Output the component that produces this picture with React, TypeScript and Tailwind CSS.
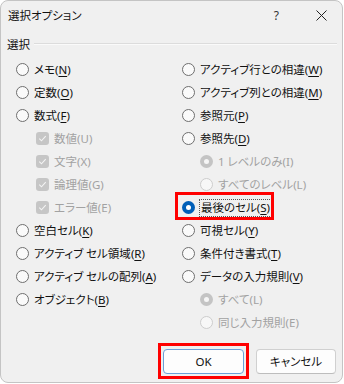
import React from "react";

type Kind = "off" | "on" | "doff" | "don" | "check";
type Item = { t: string; k: string; kind: Kind; indent?: boolean; focus?: boolean };

const left: Item[] = [
  { t: "メモ", k: "N", kind: "off" },
  { t: "定数", k: "O", kind: "off" },
  { t: "数式", k: "F", kind: "off" },
  { t: "数値", k: "U", kind: "check", indent: true },
  { t: "文字", k: "X", kind: "check", indent: true },
  { t: "論理値", k: "G", kind: "check", indent: true },
  { t: "エラー値", k: "E", kind: "check", indent: true },
  { t: "空白セル", k: "K", kind: "off" },
  { t: "アクティブ セル領域", k: "R", kind: "off" },
  { t: "アクティブ セルの配列", k: "A", kind: "off" },
  { t: "オブジェクト", k: "B", kind: "off" },
];

const right: Item[] = [
  { t: "アクティブ行との相違", k: "W", kind: "off" },
  { t: "アクティブ列との相違", k: "M", kind: "off" },
  { t: "参照元", k: "P", kind: "off" },
  { t: "参照先", k: "D", kind: "off" },
  { t: "1 レベルのみ", k: "I", kind: "don", indent: true },
  { t: "すべてのレベル", k: "L", kind: "doff", indent: true },
  { t: "最後のセル", k: "S", kind: "on", focus: true },
  { t: "可視セル", k: "Y", kind: "off" },
  { t: "条件付き書式", k: "T", kind: "off" },
  { t: "データの入力規則", k: "V", kind: "off" },
  { t: "すべて", k: "L", kind: "don", indent: true },
  { t: "同じ入力規則", k: "E", kind: "doff", indent: true },
];

function Mark({ kind }: { kind: Kind }) {
  if (kind === "check")
    return (
      <span className="w-[13px] h-[13px] rounded-[3px] bg-[#c6c6c6] flex items-center justify-center shrink-0">
        <svg width="9" height="9" viewBox="0 0 9 9">
          <path d="M1.3 4.6 L3.5 6.8 L7.7 2.2" fill="none" stroke="#f4f4f4" strokeWidth="1.1" />
        </svg>
      </span>
    );
  if (kind === "on")
    return (
      <span className="w-[13px] h-[13px] rounded-full bg-[#005fb8] flex items-center justify-center shrink-0">
        <span className="w-[5px] h-[5px] rounded-full bg-white" />
      </span>
    );
  if (kind === "don")
    return (
      <span className="w-[13px] h-[13px] rounded-full bg-[#c4c4c4] flex items-center justify-center shrink-0">
        <span className="w-[5px] h-[5px] rounded-full bg-[#f6f6f6]" />
      </span>
    );
  if (kind === "doff")
    return <span className="w-[13px] h-[13px] rounded-full border border-[#cdcdcd] bg-[#f7f7f7] shrink-0" />;
  return <span className="w-[13px] h-[13px] rounded-full border border-[#6f6f6f] bg-[#fafafa] shrink-0" />;
}

function Row({ it, right }: { it: Item; right?: boolean }) {
  const disabled = it.kind === "check" || it.kind === "don" || it.kind === "doff";
  const label = (
    <span className={disabled ? "text-[#a2a2a2]" : "text-[#111]"}>
      {it.t}(
      {disabled ? it.k : <span className="underline underline-offset-[2px] decoration-[1px]">{it.k}</span>})
    </span>
  );
  return (
    <div
      className={`h-[23px] flex items-center gap-[5px] ${
        it.indent ? (right ? "ml-[18px]" : "ml-[20px]") : ""
      }`}
    >
      <Mark kind={it.kind} />
      {it.focus ? (
        <span className="outline outline-1 outline-dotted outline-[#555] px-[1px] leading-[16px]">{label}</span>
      ) : (
        label
      )}
    </div>
  );
}

export default function App() {
  return (
    <div className="w-[344px] h-[384px] bg-white relative">
      <div className="w-[343px] h-[383px] rounded-[8px] border border-[#c4c4c4] bg-[#f0f0f0] flex flex-col text-[11.5px] leading-[16px] text-[#111] font-['Noto_Sans','Noto_Sans_CJK_JP',sans-serif] [font-feature-settings:'palt'_1]">
        {/* title bar */}
        <div className="h-[29px] flex items-center pl-[7px] pr-[15px]">
          <span>選択オプション</span>
          <span className="flex-1" />
          <span className="mr-[37px] text-[#333] text-[12px]">?</span>
          <svg width="11" height="11" viewBox="0 0 11 11">
            <path d="M0.5 0.5 L10.5 10.5 M10.5 0.5 L0.5 10.5" stroke="#222" strokeWidth="1" />
          </svg>
        </div>

        {/* group header */}
        <div className="mt-[7px] h-[16px] flex items-center pl-[6px] pr-[5px] gap-[4px]">
          <span>選択</span>
          <div className="flex-1 h-[2px] mt-[-3px] flex flex-col">
            <div className="h-px bg-[#dcdcdc]" />
            <div className="h-px bg-[#fafafa]" />
          </div>
        </div>

        {/* options */}
        <div className="mt-[5px] grid grid-cols-[166px_1fr] pl-[15px]">
          <div className="flex flex-col">
            {left.map((it, i) => (
              <Row key={i} it={it} />
            ))}
          </div>
          <div className="flex flex-col">
            {right.map((it, i) => (
              <Row key={i} it={it} right />
            ))}
          </div>
        </div>

        <div className="flex-1" />

        {/* buttons */}
        <div className="flex justify-end gap-[12px] pr-[6px] pb-[8px]">
          <div className="relative">
            <div className="w-[81px] h-[25px] rounded-[4px] border border-[#6a9fd8] bg-[#fdfdfd] flex items-center justify-center">
              OK
            </div>
            <div className="absolute left-[-5px] right-[-5px] top-[-6px] bottom-[-5px] border-[3px] border-[#ff0000]" />
          </div>
          <div className="w-[80px] h-[25px] rounded-[4px] border border-[#d0d0d0] border-b-[#bdbdbd] bg-[#fdfdfd] flex items-center justify-center">
            キャンセル
          </div>
        </div>
      </div>

      {/* annotation around 最後のセル */}
      <div className="absolute left-[175px] top-[192px] w-[99px] h-[28px] border-[3px] border-[#ff0000]" />
    </div>
  );
}
